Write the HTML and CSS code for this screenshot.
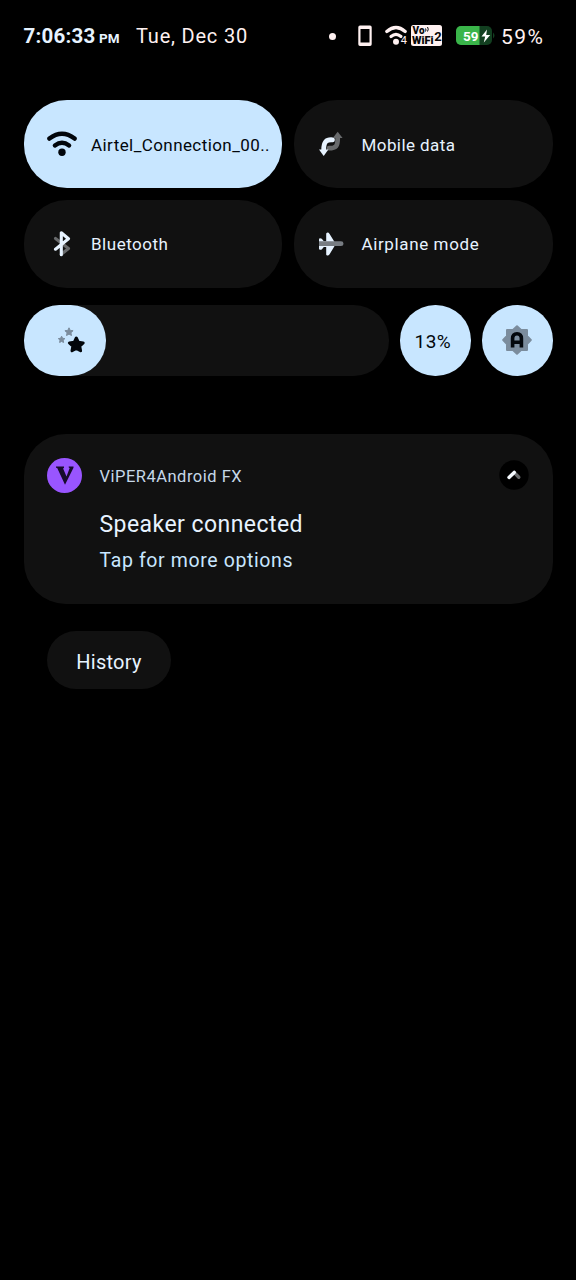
FILE: index.html
```html
<!DOCTYPE html>
<html lang="en">
<head>
<meta charset="utf-8">
<title>Quick settings</title>
<link rel="stylesheet" href="styles.css">
</head>
<body>
<main class="shade">
  <header class="status">
    <span class="clock">7:06:33</span><span class="ampm">PM</span>
    <span class="date">Tue, Dec 30</span>
    <span class="dot"></span>
    <svg class="phone" width="14" height="22" viewBox="0 0 14 22"><path fill="#fff1f1" fill-rule="evenodd" d="M2 .5h10a1.7 1.7 0 0 1 1.7 1.7v17a1.7 1.7 0 0 1-1.7 1.7H2A1.7 1.7 0 0 1 .3 19.2v-17A1.7 1.7 0 0 1 2 .5zM2.5 4v13.5h9V4z"/></svg>
    <svg class="wifi-small" width="24" height="22" viewBox="0 0 24 22"><g fill="none" stroke="#fff1f1" stroke-width="3.2" stroke-linecap="round"><path d="M1.8 6.5Q11 -1.5 20.2 6.5"/><path d="M6 11.5Q11 7.3 16 11.5"/></g><circle cx="11" cy="16.8" r="3" fill="#fff1f1"/><text class="gen" x="15.8" y="19">4</text></svg>
    <svg class="vowifi" width="32" height="22" viewBox="0 0 32 22"><rect width="31" height="21" rx="2.5" fill="#fff1f1"/><text class="vo" x="1.5" y="9.3" textLength="12" lengthAdjust="spacingAndGlyphs">Vo</text><text class="vo" x="1" y="19" textLength="21.5" lengthAdjust="spacingAndGlyphs">WiFi</text><text class="sim" x="23.3" y="15.5">2</text><path d="M14.5 3.5q1 1.5 0 3M16.5 2q1.5 2.2 0 4.5" fill="none" stroke="#080808"/></svg>
    <svg class="battery" width="40" height="20" viewBox="0 0 40 20"><rect width="36" height="19" rx="5" fill="#123f20"/><path d="M5 0h18.5v19H5a5 5 0 0 1-5-5V5a5 5 0 0 1 5-5z" fill="#3ab54a"/><path d="M37 6.5q3 3 0 6z" fill="#123f20"/><text class="level" x="7" y="14.5" textLength="15.5" lengthAdjust="spacingAndGlyphs">59</text><path d="M31 3.5l-5.5 7h3.7l-1.4 6 6.4-7.6h-4z" fill="#fff"/></svg>
    <span class="percent">59%</span>
  </header>

  <section class="tiles">
    <div class="tile on">
      <svg width="30" height="26" viewBox="0 0 30 26"><g fill="none" stroke="#02060b" stroke-width="4.4" stroke-linecap="round"><path d="M2.4 7.6Q15 -2.2 27.6 7.6"/><path d="M7.9 14.4Q15 9 22.1 14.4"/></g><circle cx="15" cy="21.3" r="3.7" fill="#02060b"/></svg>
      <span class="label airtel">Airtel_Connection_00..</span>
    </div>
    <div class="tile">
      <svg width="30" height="26" viewBox="0 0 30 26"><path d="M12 17.2c7 0 8.7-2 8.7-10" fill="none" stroke="#686a6c" stroke-width="4.8" stroke-linecap="round"/><path d="M15.8 7L20.7.8 25.6 7z" fill="#686a6c"/><path d="M16 9.2c-7-.4-9.3 2.5-9.3 8" fill="none" stroke="#111" stroke-width="6.5"/><path d="M15.5 8.8c-6.5-.6-8.8 2.5-8.8 10" fill="none" stroke="#e7f3ff" stroke-width="4.8" stroke-linecap="round"/><path d="M2 18.6h9.4L6.7 25z" fill="#e7f3ff"/></svg>
      <span class="label mobile">Mobile data</span>
    </div>
    <div class="tile">
      <svg width="30" height="26" viewBox="0 0 30 26"><g fill="none" stroke-width="3.1" stroke-linecap="round" stroke-linejoin="round"><path d="M8.5 7.5L21.5 17.5l-7.2 5.7" stroke="#686a6c"/><path d="M8.5 18.2L21.5 7.8l-7.2-6V23.7" stroke="#e7f3ff"/></g></svg>
      <span class="label bluetooth">Bluetooth</span>
    </div>
    <div class="tile">
      <svg width="30" height="26" viewBox="0 0 30 26"><path d="M9.2 2.5q1.7-2 3.4.5l6.2 10-6.2 10.2q-1.7 2.5-3.4.5V16H6.8l-2 2.4q-2.8 1-2.8-.7V8.4q0-1.7 2.8-.7l2 2.6h2.4z" fill="#e7f3ff"/><path d="M2 10.3h22q2.5 0 2.5 2.4T24 15.1H2z" fill="#777c82"/></svg>
      <span class="label airplane">Airplane mode</span>
    </div>
  </section>

  <section class="brightness">
    <div class="slider"><div class="fill">
      <svg width="30" height="28" viewBox="0 0 30 28"><g stroke-linejoin="round"><g fill="#7b8c9d" stroke="#7b8c9d"><path d="M12 1.8l1.2 2.6 2.9.3-2.2 2 .6 2.8-2.5-1.4-2.5 1.4.6-2.8-2.2-2 2.9-.3z"/><path d="M4.6 10.2l1 2.1 2.3.3-1.7 1.6.4 2.3-2-1.1-2 1.1.4-2.3-1.7-1.6 2.3-.3z"/></g><path d="M19.3 12l2.1 4.3 4.8.6-3.5 3.2.9 4.6-4.3-2.3-4.3 2.3.9-4.6-3.5-3.2 4.8-.6z" fill="#02060b" stroke="#02060b" stroke-width="3"/></g></svg>
    </div></div>
    <div class="round"><span class="value">13%</span></div>
    <div class="round">
      <svg width="30" height="30" viewBox="0 0 30 30"><path d="M15 1.2l4 3.8h6v6l3.8 4-3.8 4v6h-6l-4 3.8-4-3.8H5v-6l-3.8-4L5 11V5h6z" fill="#7b8c9d" stroke="#7b8c9d" stroke-width="2" stroke-linejoin="round"/><path d="M10.6 22.5v-9q0-4.7 4.4-4.7t4.4 4.7v9M10.6 17.2h8.8" fill="none" stroke="#02060b" stroke-width="3.6"/></svg>
    </div>
  </section>

  <article class="notice">
    <svg class="app" width="35" height="35" viewBox="0 0 35 35"><circle cx="17.5" cy="17.5" r="17.5" fill="#9955ff"/><path d="M9 9.8V8.5h8v1.3l-.9.6 3.4 8L22.7 10l-1-.6v-.9h4.8v1.3L18 26.8 10.2 10z" fill="#170b2e"/></svg>
    <div class="copy">
      <span class="appname">ViPER4Android FX</span>
      <strong class="title">Speaker connected</strong>
      <span class="body">Tap for more options</span>
    </div>
    <svg class="collapse" width="30" height="30" viewBox="0 0 30 30"><circle cx="15" cy="15" r="14.7"/><g fill="none" stroke-width="3.4" stroke-linecap="round"><path d="M15.3 12.6l4.5 4.6" stroke="#686a6c"/><path d="M10 17.4l5.2-5" stroke="#f5faff"/></g></svg>
  </article>
  <button class="history"><span>History</span></button>
</main>
</body>
</html>
```
FILE: styles.css
```css
* { box-sizing: border-box; }
body { margin: 0; background: #000; color: #e7f3ff; font-family: Roboto, "Noto Sans", sans-serif; }
svg { display: block; flex: none; }
.shade { height: 1280px; padding: 0 23.5px; overflow: hidden; }
.status { display: flex; align-items: center; height: 100px; padding-bottom: 28px; white-space: nowrap; }
.clock { width: 75.5px; font-size: 20.5px; font-weight: 700; letter-spacing: .25px; }
.ampm { width: 37px; padding-top: 3px; font-size: 13.5px; font-weight: 700; }
.date { width: 193px; color: #fff1f1; font-size: 20px; letter-spacing: .8px; }
.dot { width: 7px; height: 7px; margin-right: 22px; border-radius: 50%; background: #fff1f1; }
.phone { margin-right: 13px; }
.wifi-small { margin-right: 2px; }
.vowifi { margin-right: 13px; }
.battery { margin-right: 5px; }
.percent { padding-top: 2px; color: #fff1f1; font-size: 21px; letter-spacing: 1.4px; }
.gen { font: 11px Roboto, sans-serif; fill: #fff1f1; stroke: #000; stroke-width: 2px; paint-order: stroke; }
.vo { font: 900 10px/1 Roboto, sans-serif; fill: #080808; }
.sim { font: 700 13px Roboto, sans-serif; fill: #080808; }
.level { font: 700 13.5px Roboto, sans-serif; fill: #fff; }
.tiles { display: grid; grid-template-columns: 258.5px 258.5px; grid-auto-rows: 88px; gap: 11.5px 12px; }
.tile { display: flex; align-items: center; gap: 14.5px; padding-left: 23px; border-radius: 43px; background: #111; white-space: nowrap; }
.on { background: #c8e6ff; color: #02060b; }
.label { padding-top: 1px; font-size: 17px; letter-spacing: .42px; }
.bluetooth { letter-spacing: .52px; }
.airplane { letter-spacing: .62px; }
.brightness { display: flex; margin-top: 17.5px; height: 70.5px; gap: 11.5px; }
.slider { width: 365.5px; border-radius: 35.25px; background: #111; }
.fill { width: 82.5px; height: 100%; padding: 21px 0 0 33px; border-radius: 35.25px; background: #c8e6ff; }
.round { display: grid; place-items: center; width: 70.5px; border-radius: 50%; background: #c8e6ff; color: #02060b; }
.value { padding: 2px 5px 0 0; font-size: 19px; letter-spacing: .4px; }
.notice { display: flex; height: 170px; margin-top: 58.5px; padding: 23.5px; border-radius: 42px; background: #111; }
.copy { display: flex; flex-direction: column; width: 400px; margin-left: 17.5px; white-space: nowrap; }
.appname { height: 38px; padding-top: 8px; color: #c6d8e8; font-size: 16.5px; line-height: 22px; letter-spacing: .5px; }
.title { height: 48px; padding-top: 14px; font-size: 23px; font-weight: 400; line-height: 30px; letter-spacing: .45px; }
.body { color: #c8e6ff; padding-top: 4px; font-size: 19.5px; line-height: 26px; letter-spacing: .62px; }
.collapse { margin: 2.5px 0 0 auto; }
.history { display: flex; align-items: center; justify-content: center; width: 124px; height: 58px; margin: 27px 0 0 23.5px; padding: 3px 0 0; border: 0; border-radius: 29px; background: #111; color: #e7f3ff; font: 20px Roboto, sans-serif; letter-spacing: .25px; }
```
